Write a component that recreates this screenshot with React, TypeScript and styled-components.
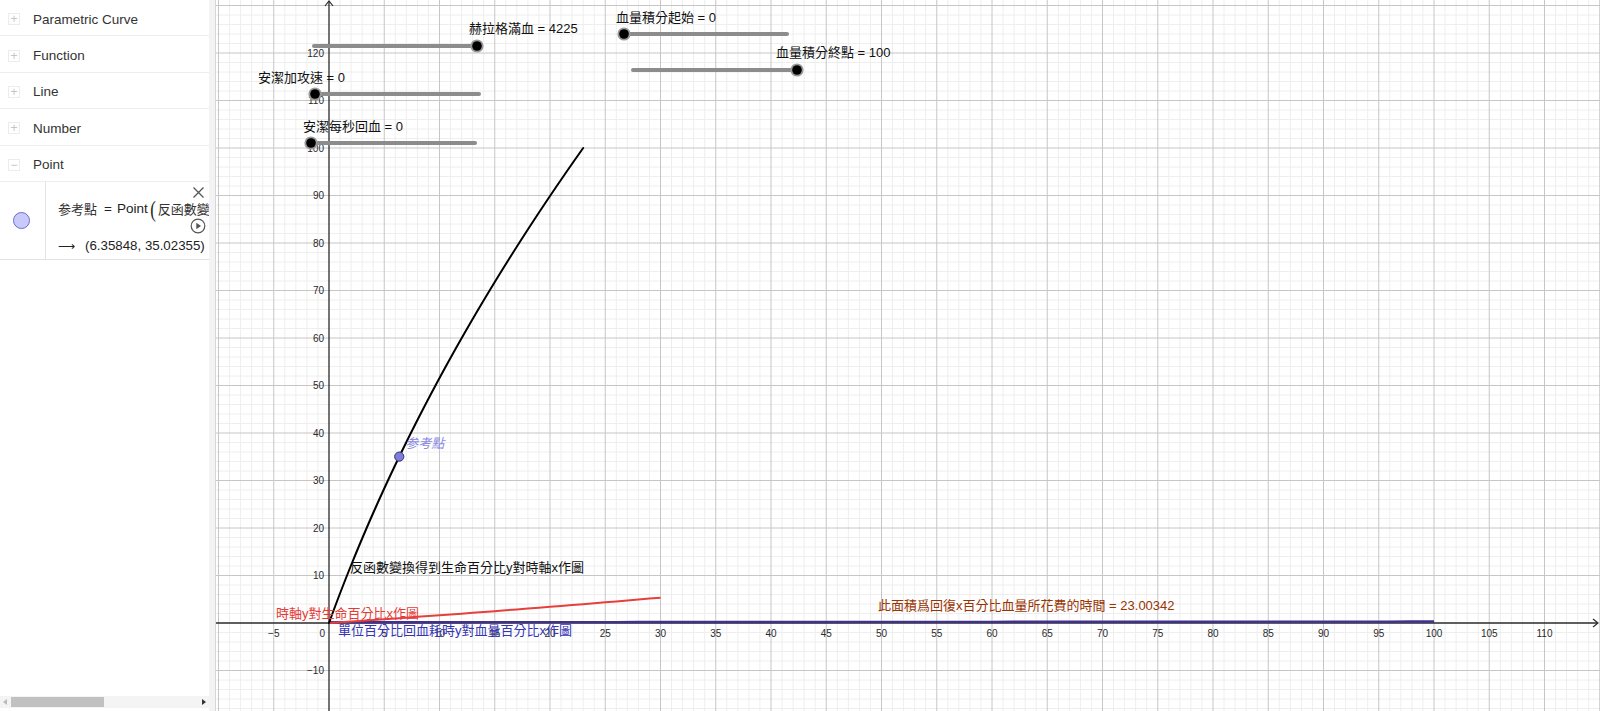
import React from "react";
import styled, { createGlobalStyle } from "styled-components";

const GlobalStyle = createGlobalStyle`
  html, body {
    margin: 0;
    padding: 0;
    background: #fff;
    overflow: hidden;
  }
  body {
    font-family: "Liberation Sans", "Noto Sans CJK TC", sans-serif;
  }
`;

const Layout = styled.div`
  display: flex;
  width: 1600px;
  height: 711px;
  overflow: hidden;
`;

const AlgebraPanel = styled.div`
  width: 209px;
  flex: none;
  display: flex;
  flex-direction: column;
  background: #fff;
`;

const Splitter = styled.div`
  width: 6px;
  flex: none;
  background: #f3f3f3;
  border-right: 1px solid #d6d6d6;
`;

const GraphView = styled.div`
  flex: 1;
  position: relative;
  overflow: hidden;
  background: #fff;
`;

const CategoryRow = styled.div`
  height: 36.4px;
  box-sizing: border-box;
  display: flex;
  align-items: center;
  gap: 13px;
  padding: 3px 0 0 8px;
  border-bottom: 1px solid #ededed;
  font-size: 13.5px;
  color: #333;
`;

const ToggleBox = styled.span`
  width: 12px;
  height: 12px;
  box-sizing: border-box;
  border: 1px solid #ececec;
  display: flex;
  align-items: center;
  justify-content: center;
  color: #c4c4c4;
  font-size: 12px;
  line-height: 1;
`;

const PointItem = styled.div`
  position: relative;
  height: 78px;
  box-sizing: border-box;
  display: flex;
  border-bottom: 1px solid #e2e2e2;
`;

const MarbleCell = styled.div`
  width: 46px;
  flex: none;
  box-sizing: border-box;
  border-right: 1px solid #e4e4e4;
  display: flex;
  align-items: center;
  justify-content: center;
  padding-right: 2px;
`;

const Marble = styled.span`
  width: 15px;
  height: 15px;
  border-radius: 50%;
  background: #c9c9fb;
  border: 1.3px solid #6b6bd0;
`;

const ItemContent = styled.div`
  flex: 1;
  min-width: 0;
  overflow: hidden;
  padding-left: 12px;
  white-space: nowrap;
`;

const DefLine = styled.div`
  margin-top: 14px;
  height: 26px;
  line-height: 26px;
  font-size: 13.5px;
  color: #222;
  display: flex;
  align-items: center;
`;

const CjkName = styled.span`
  font-family: "Noto Sans CJK TC", sans-serif;
  font-size: 13px;
  color: #333;
`;

const Op = styled.span`
  margin: 0 5px 0 7px;
`;

const BigParen = styled.span`
  font-family: "Liberation Serif", serif;
  font-size: 24px;
  font-weight: 300;
  margin: 0 1px 0 1px;
  transform: scaleX(0.7);
  display: inline-block;
`;

const ValueLine = styled.div`
  margin-top: 14px;
  line-height: 20px;
  font-size: 13.3px;
  color: #222;
`;

const Arrow = styled.span`
  margin-right: 10px;
  font-size: 12px;
`;

const IconButton = styled.span<{ $top: number }>`
  position: absolute;
  right: 3px;
  top: ${(p) => p.$top}px;
  width: 16px;
  height: 16px;
  display: flex;
  align-items: center;
  justify-content: center;
`;

const Filler = styled.div`
  flex: 1;
`;

const ScrollBar = styled.div`
  height: 12px;
  margin-bottom: 3px;
  background: #f4f4f4;
  display: flex;
  align-items: center;
  padding: 0 3px;
  gap: 4px;
`;

const ScrollArrow = styled.span<{ $dark?: boolean }>`
  width: 0;
  height: 0;
  border-top: 3.5px solid transparent;
  border-bottom: 3.5px solid transparent;
  ${(p) =>
    p.$dark
      ? "border-left: 4px solid #333; margin-left: auto;"
      : "border-right: 4px solid #bbb;"}
`;

const ScrollThumb = styled.span`
  width: 93px;
  height: 10px;
  background: #c1c1c1;
`;

const Canvas = styled.svg`
  display: block;
`;

const AxisLabel = styled.text`
  font-family: "Liberation Sans", sans-serif;
  font-size: 10px;
  fill: #2a2a2a;
`;

const Caption = styled.text<{ $color: string; $italic?: boolean }>`
  font-family: "Liberation Sans", "Noto Sans CJK TC", sans-serif;
  font-size: 13px;
  fill: ${(p) => p.$color};
  font-style: ${(p) => (p.$italic ? "italic" : "normal")};
`;

// graph coordinate system (svg-local, graph view starts at page x = 216)
const W = 1384;
const H = 711;
const OX = 113;
const OY = 623;
const SX = 11.05;
const SY = 4.75;
const X = (u: number) => OX + u * SX;
const Y = (v: number) => OY - v * SY;

const A = 0.155414;
const B = 0.000746197;
const f = (v: number) => A * v + B * v * v;
const df = (v: number) => A + 2 * B * v;

const range = (a: number, b: number, step = 1) => {
  const out: number[] = [];
  for (let i = a; i <= b + 1e-9; i += step) out.push(i);
  return out;
};

const blackPath = range(0, 100, 1)
  .map((v, i) => `${i ? "L" : "M"}${X(f(v)).toFixed(2)},${Y(v).toFixed(2)}`)
  .join(" ");
const redPath = range(0, 30, 1)
  .map((u, i) => `${i ? "L" : "M"}${X(u).toFixed(2)},${Y(f(u)).toFixed(2)}`)
  .join(" ");
const bluePts = range(0, 100, 2).map((u) => `${X(u).toFixed(2)},${Y(df(u)).toFixed(2)}`);
const blueArea = `M${X(0)},${OY} L${bluePts.join(" L")} L${X(100)},${OY} Z`;
const bluePath = `M${bluePts.join(" L")}`;

type Slider = { x1: number; x2: number; y: number; at: number; label: string; lx: number; ly: number };
const sliders: Slider[] = [
  { x1: 314, x2: 477, y: 46, at: 477, label: "赫拉格滿血 = 4225", lx: 469, ly: 28 },
  { x1: 315, x2: 479, y: 94, at: 315, label: "安潔加攻速 = 0", lx: 258, ly: 77 },
  { x1: 311, x2: 475, y: 143, at: 311, label: "安潔每秒回血 = 0", lx: 303, ly: 126 },
  { x1: 624, x2: 787, y: 34, at: 624, label: "血量積分起始 = 0", lx: 616, ly: 17 },
  { x1: 633, x2: 797, y: 70, at: 797, label: "血量積分終點 = 100", lx: 776, ly: 52 },
];
const PX = (pageX: number) => pageX - 216;

const Graph = () => {
  const vLines = range(-10, 125);
  const hLines = range(-18, 132, 2);
  const px = 6.35848;
  const py = 35.02355;
  return (
    <Canvas width={W} height={H} viewBox={`0 0 ${W} ${H}`}>
      {vLines
        .filter((u) => u % 5 !== 0)
        .map((u) => (
          <line key={`vm${u}`} x1={X(u)} x2={X(u)} y1={0} y2={H} stroke="#eeeeee" strokeWidth={1} />
        ))}
      {hLines
        .filter((v) => v % 10 !== 0)
        .map((v) => (
          <line key={`hm${v}`} x1={0} x2={W} y1={Y(v)} y2={Y(v)} stroke="#eeeeee" strokeWidth={1} />
        ))}
      {vLines
        .filter((u) => u % 5 === 0 && u !== 0)
        .map((u) => (
          <line key={`vM${u}`} x1={X(u)} x2={X(u)} y1={0} y2={H} stroke="#c6c6c6" strokeWidth={1} />
        ))}
      {hLines
        .filter((v) => v % 10 === 0 && v !== 0)
        .map((v) => (
          <line key={`hM${v}`} x1={0} x2={W} y1={Y(v)} y2={Y(v)} stroke="#c6c6c6" strokeWidth={1} />
        ))}

      {/* axes */}
      <line x1={0} x2={W - 2} y1={OY} y2={OY} stroke="#2a2a2a" strokeWidth={1.3} />
      <polyline points={`${W - 7},${OY - 4} ${W - 2},${OY} ${W - 7},${OY + 4}`} fill="none" stroke="#2a2a2a" strokeWidth={1.2} />
      <line x1={OX} x2={OX} y1={1} y2={H} stroke="#2a2a2a" strokeWidth={1.3} />
      <polyline points={`${OX - 4},${6} ${OX},${1} ${OX + 4},${6}`} fill="none" stroke="#2a2a2a" strokeWidth={1.2} />

      {range(-5, 110, 5)
        .filter((u) => u !== 0)
        .map((u) => (
          <AxisLabel key={`xl${u}`} x={X(u)} y={OY + 14} textAnchor="middle">
            {u < 0 ? `\u2212${-u}` : u}
          </AxisLabel>
        ))}
      <AxisLabel x={OX - 4} y={OY + 14} textAnchor="end">
        0
      </AxisLabel>
      {[...range(10, 120, 10), -10].map((v) => (
        <AxisLabel key={`yl${v}`} x={OX - 5} y={Y(v) + 3.5} textAnchor="end">
          {v < 0 ? `\u2212${-v}` : v}
        </AxisLabel>
      ))}

      {/* curves */}
      <path d={blueArea} fill="#40308f" fillOpacity={0.35} />
      <path d={bluePath} fill="none" stroke="#40308f" strokeWidth={2.4} />
      <path d={redPath} fill="none" stroke="#e6403c" strokeWidth={2} />
      <path d={blackPath} fill="none" stroke="#000" strokeWidth={2} strokeLinecap="round" />

      <circle cx={X(px)} cy={Y(py)} r={4.6} fill="#7d7de0" stroke="#333366" strokeWidth={1} />
      <Caption $color="#8a8ae2" $italic x={X(px) + 6} y={Y(py) - 9}>
        参考點
      </Caption>

      <Caption $color="#111" x={PX(350)} y={571.5}>
        反函數變換得到生命百分比y對時軸x作圖
      </Caption>
      <Caption $color="#e53b36" x={PX(276)} y={617.5}>
        時軸y對生命百分比x作圖
      </Caption>
      <Caption $color="#3434b4" x={PX(338)} y={634.5}>
        單位百分比回血耗時y對血量百分比x作圖
      </Caption>
      <Caption $color="#993300" x={PX(878)} y={609.5}>
        此面積爲回復x百分比血量所花費的時間 = 23.00342
      </Caption>

      {/* sliders */}
      {sliders.map((s) => (
        <g key={s.label}>
          <line x1={PX(s.x1)} x2={PX(s.x2)} y1={s.y} y2={s.y} stroke="#8c8c8c" strokeWidth={4} strokeLinecap="round" />
          <circle cx={PX(s.at)} cy={s.y} r={6.6} fill="#9a9a9a" />
          <circle cx={PX(s.at)} cy={s.y} r={4.8} fill="#000" />
          <Caption $color="#111" x={PX(s.lx)} y={s.ly + 4.5}>
            {s.label}
          </Caption>
        </g>
      ))}
    </Canvas>
  );
};

const categories = ["Parametric Curve", "Function", "Line", "Number"];

export default function App() {
  return (
    <Layout>
      <GlobalStyle />
      <AlgebraPanel>
        {categories.map((c) => (
          <CategoryRow key={c}>
            <ToggleBox>+</ToggleBox>
            {c}
          </CategoryRow>
        ))}
        <CategoryRow>
          <ToggleBox>−</ToggleBox>
          Point
        </CategoryRow>
        <PointItem>
          <MarbleCell>
            <Marble />
          </MarbleCell>
          <ItemContent>
            <DefLine>
              <CjkName>参考點</CjkName>
              <Op>=</Op>
              Point
              <BigParen>(</BigParen>
              <CjkName>反函數變換得到生命百分比y對時軸x作圖</CjkName>
            </DefLine>
            <ValueLine>
              <Arrow>⟶</Arrow>(6.35848, 35.02355)
            </ValueLine>
          </ItemContent>
          <IconButton $top={3}>
            <svg width="13" height="13" viewBox="0 0 13 13">
              <path d="M1.5 1.5 L11.5 11.5 M11.5 1.5 L1.5 11.5" stroke="#555" strokeWidth="1.3" fill="none" />
            </svg>
          </IconButton>
          <IconButton $top={36}>
            <svg width="16" height="16" viewBox="0 0 16 16">
              <circle cx="8" cy="8" r="6.8" stroke="#555" strokeWidth="1.2" fill="#fff" />
              <path d="M6.3 4.8 L11 8 L6.3 11.2 Z" fill="#555" />
            </svg>
          </IconButton>
        </PointItem>
        <Filler />
        <ScrollBar>
          <ScrollArrow />
          <ScrollThumb />
          <ScrollArrow $dark />
        </ScrollBar>
      </AlgebraPanel>
      <Splitter />
      <GraphView>
        <Graph />
      </GraphView>
    </Layout>
  );
}
